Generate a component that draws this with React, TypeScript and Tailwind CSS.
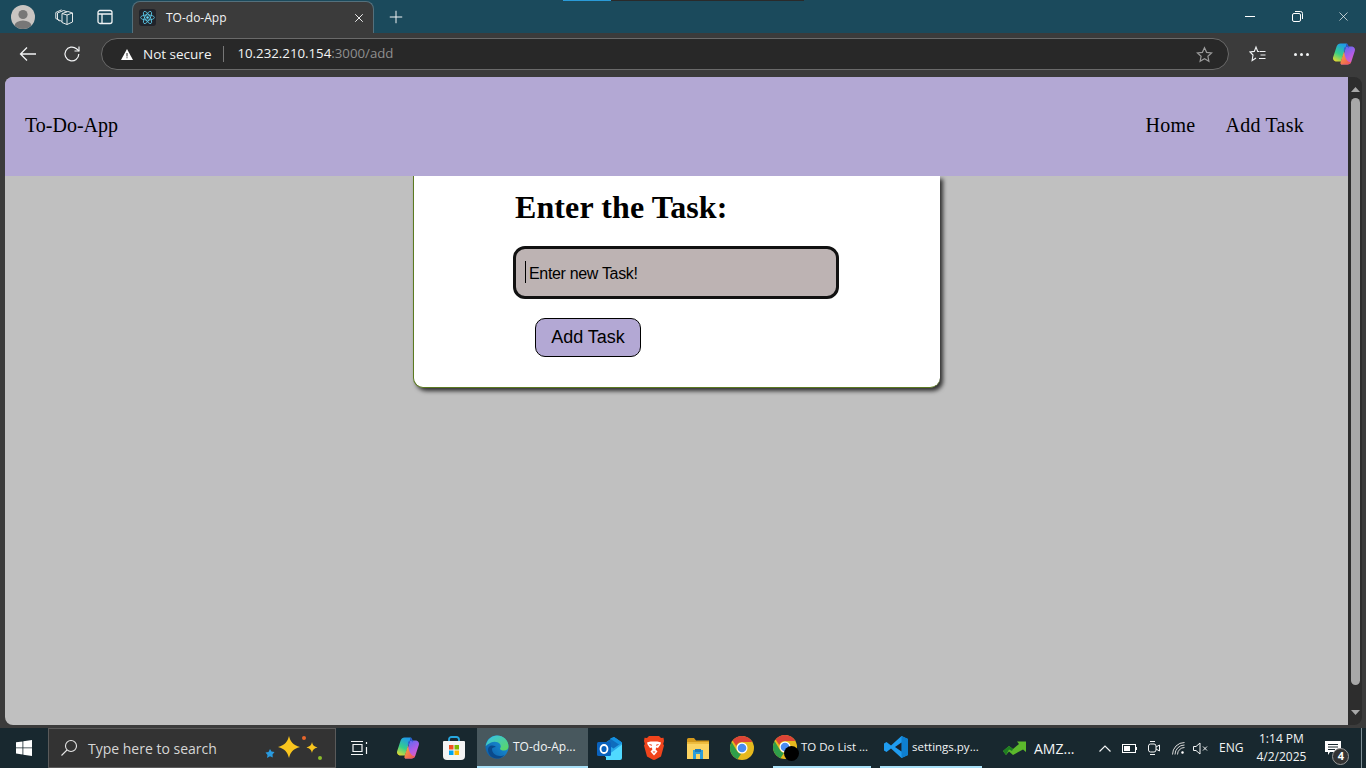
import { Plus, X } from 'lucide-react';

const sans = 'font-["Segoe_UI","Open_Sans","Noto_Sans",sans-serif]';

function Avatar() {
  return (
    <svg width="24" height="24" viewBox="0 0 24 24">
      <defs>
        <clipPath id="av"><circle cx="12" cy="12" r="12" /></clipPath>
      </defs>
      <g clipPath="url(#av)">
        <rect width="24" height="24" fill="#c9c5c2" />
        <circle cx="12" cy="9.5" r="4.6" fill="#777" />
        <ellipse cx="12" cy="21" rx="8.5" ry="5.6" fill="#777" />
      </g>
    </svg>
  );
}

function Workspaces() {
  return (
    <svg width="18" height="16" viewBox="0 0 18 16" fill="none" stroke="#e6e9ea" strokeWidth="1">
      <path d="M7 4.500 13 2.500l4.500 1.500v9L12 15.500l-5-2Z" />
      <path d="M12 15.500V6L7 4.500M12 6l5.500-2" />
      <path d="M4.500 12 2.500 10.500V4L8.500 1.500 12 2.800" />
      <path d="M7 12.500 .8 9.500V3.500L6.500.8" />
    </svg>
  );
}

function TabActions() {
  return (
    <svg width="16" height="16" viewBox="0 0 16 16" fill="none" stroke="#f2f4f5" strokeWidth="1.300">
      <rect x="1" y="1.500" width="14" height="13" rx="2" />
      <path d="M1 5h14M5 5v9.500" />
    </svg>
  );
}

function ReactIcon() {
  return (
    <div className="flex h-[17px] w-[17px] items-center justify-center rounded-[3px] bg-[#20232a]">
      <svg width="15" height="15" viewBox="-12 -12 24 24" fill="none" stroke="#61dafb" strokeWidth="1.200">
        <circle r="2" fill="#61dafb" stroke="none" />
        <ellipse rx="11" ry="4.200" />
        <ellipse rx="11" ry="4.200" transform="rotate(60)" />
        <ellipse rx="11" ry="4.200" transform="rotate(120)" />
      </svg>
    </div>
  );
}

function CopilotIcon({ id }: { id: string }) {
  return (
    <svg width="24" height="24" viewBox="0 0 24 24">
      <defs>
        <linearGradient id={`${id}a`} x1="0.6" y1="0" x2="0.2" y2="1">
          <stop offset="0" stopColor="#1f9be8" />
          <stop offset="0.55" stopColor="#35cf8a" />
          <stop offset="1" stopColor="#e3d92f" />
        </linearGradient>
        <linearGradient id={`${id}b`} x1="0.3" y1="0" x2="0.8" y2="1">
          <stop offset="0" stopColor="#5b6cf0" />
          <stop offset="0.55" stopColor="#b45be6" />
          <stop offset="1" stopColor="#f062a8" />
        </linearGradient>
        <linearGradient id={`${id}c`} x1="0" y1="0" x2="1" y2="1">
          <stop offset="0" stopColor="#f9b13a" />
          <stop offset="1" stopColor="#ec4a5c" />
        </linearGradient>
      </defs>
      <path d="M8.500 1.500H15L9 19.500H4.500C2 19.500.4 17.300 1.200 15L4.700 4.300C5.300 2.600 6.700 1.500 8.500 1.500Z" fill={`url(#${id}a)`} />
      <path d="M14 4.500H19.500C22 4.500 23.600 6.700 22.800 9L19.300 19.700C18.700 21.400 17.300 22.500 15.500 22.500H9Z" fill={`url(#${id}b)`} />
      <path d="M12 9.500 8.500 20.500C8 22 9 22.500 10 22.500H15.500C17 22.500 18.400 21.700 19 20.300 15 20 13 16 12 9.500Z" fill={`url(#${id}c)`} />
      <path d="M15 1.500 12 9.500C11.500 7.500 12.500 4.500 14 4.500 15.500 4.500 16.500 5.500 17 6.500 16.700 4 16 2.500 15 1.500Z" fill="#2f58d8" />
    </svg>
  );
}

function EdgeIcon() {
  return (
    <svg width="24" height="24" viewBox="0 0 24 24">
      <defs>
        <linearGradient id="edA" x1="0" y1="1" x2="1" y2="0">
          <stop offset="0" stopColor="#0c59a4" />
          <stop offset="1" stopColor="#1b9de2" />
        </linearGradient>
        <linearGradient id="edB" x1="0" y1="0" x2="1" y2="1">
          <stop offset="0" stopColor="#35c1f1" />
          <stop offset="1" stopColor="#5dd85a" />
        </linearGradient>
      </defs>
      <circle cx="12" cy="12" r="11.500" fill="url(#edA)" />
      <path d="M.7 11C2 4 7 .5 12 .5c6 0 11.500 4.500 11.500 11 0 2.500-2 4-4.500 4-2 0-4-.6-4-2 1-1 1-3 0-4.500C13 6.500 9 6 6 7.500 3.500 8.800 2 10 .7 11Z" fill="url(#edB)" />
      <path d="M7 14c0 4 3.500 7 8 7 2 0 3.500-.5 4.500-1.300-2 3-5 3.800-7.500 3.800-5 0-9-4-9-9 0-2 1.500-4 4-4 2.200 0 3.500 1 3.800 1.500C8.500 12 7 13 7 14Z" fill="#0a4a8c" />
    </svg>
  );
}

function OutlookIcon() {
  return (
    <svg width="26" height="24" viewBox="0 0 26 24">
      <path d="M8 7 17 1l8 5.500V19a2 2 0 0 1-2 2H8Z" fill="#28a8ea" />
      <path d="M8 7 17 1l8 5.500-8.500 6Z" fill="#0f6cbd" />
      <path d="M17 1l8 5.500-3 2-9-6Z" fill="#1490df" />
      <path d="M9 24h14a2 2 0 0 0 2-2V8.500l-12 9H9Z" fill="#50d9ff" />
      <rect x="0" y="6" width="14" height="14" rx="1.500" fill="#0a62bd" />
      <ellipse cx="7" cy="13" rx="3.500" ry="4" fill="none" stroke="#fff" strokeWidth="1.800" />
    </svg>
  );
}

function BraveIcon() {
  return (
    <svg width="20" height="24" viewBox="0 0 20 24">
      <path d="M5 0h10l2 2 2.500-.3L20 5l-.8 3 .8 1.500-3 11-5.500 3L10 24l-1.500-.5-5.500-3L0 9.500.8 8 0 5 .5 1.700 3 2Z" fill="#f0441c" />
      <path d="M6.500 5.500h7l3.500 1-.6 2-2.400 3.500-1.800-.6-.6 2 1.900 2.100L10 19.500 6.500 15.500l1.900-2.100-.6-2-1.800.6L3.600 8.500 3 6.500Z" fill="#fff" />
      <path d="M8.500 15.500h3L10 17Z" fill="#f0441c" />
      <path d="M5.500 8.500 8 9.300M14.500 8.500 12 9.300" stroke="#f0441c" strokeWidth="1" />
    </svg>
  );
}

function ExplorerIcon() {
  return (
    <svg width="22" height="21" viewBox="0 0 22 21">
      <path d="M0 1.500A1.500 1.500 0 0 1 1.500 0H7l2 2.500h13V6H0Z" fill="#d4991c" />
      <rect y="4.500" width="22" height="16.500" fill="#fcd462" />
      <rect y="4.500" width="22" height="1.500" fill="#f0bd3e" />
      <path d="M6 12h10v9h-3v-5H9v5H6Z" fill="#2e9ed8" />
      <rect x="8" y="11" width="6" height="3" fill="#1c78b8" />
    </svg>
  );
}

function ChromeIcon() {
  return (
    <svg width="24" height="24" viewBox="0 0 24 24">
      <circle cx="12" cy="12" r="12" fill="#e6b91e" />
      <path d="M12 0a12 12 0 0 1 10.400 6H12a6 6 0 0 0-5.700 4L2.600 4.400A12 12 0 0 1 12 0Z" fill="#dc4437" />
      <path d="M1.600 6 7 15a6 6 0 0 0 4 2.900L7.500 23.200A12 12 0 0 1 1.600 6Z" fill="#2f9e4a" />
      <circle cx="12" cy="12" r="5.500" fill="#fff" />
      <circle cx="12" cy="12" r="4.300" fill="#4a8cf0" />
    </svg>
  );
}

function VscodeIcon() {
  return (
    <svg width="24" height="24" viewBox="0 0 24 24">
      <path d="M17.500 1 24 4v16l-6.500 3L7 13.500l-4.500 3.500L0 15.500v-7L2.500 7 7 10.500Z" fill="#1f9cf0" />
      <path d="M17.500 1 24 4v16l-6.500 3Z" fill="#0e7fd0" />
      <path d="M17.500 7.500 11 12l6.500 4.500Z" fill="#17202a" />
    </svg>
  );
}

function StoreIcon() {
  return (
    <svg width="24" height="24" viewBox="0 0 24 24">
      <path d="M7 6V3.500A2.500 2.500 0 0 1 9.500 1h5A2.500 2.500 0 0 1 17 3.500V6" fill="none" stroke="#27a8e0" strokeWidth="1.800" />
      <path d="M1 6a1 1 0 0 1 1-1h20a1 1 0 0 1 1 1v14a4 4 0 0 1-4 4H5a4 4 0 0 1-4-4Z" fill="#f4f4f4" />
      <rect x="7" y="9" width="4.500" height="4.500" fill="#f25022" />
      <rect x="12.500" y="9" width="4.500" height="4.500" fill="#7fba00" />
      <rect x="7" y="14.500" width="4.500" height="4.500" fill="#00a4ef" />
      <rect x="12.500" y="14.500" width="4.500" height="4.500" fill="#ffb900" />
    </svg>
  );
}

function Sparkles() {
  return (
    <svg width="62" height="28" viewBox="0 0 62 28">
      <path d="M24 2c1.500 6 4 9 11 11-7 2-9.500 5-11 11-1.500-6-4-9-11-11 7-2 9.500-5 11-11Z" fill="#f9c51e" />
      <path d="M47 8c.6 3 1.800 4.400 5.500 5.500-3.700 1-4.900 2.500-5.500 5.500-.6-3-1.800-4.500-5.500-5.500C45.200 12.400 46.400 11 47 8Z" fill="#f9c51e" />
      <path d="M5 15l1.500 2.500 3 .5-2 2.500.3 3-2.800-1.200L2 24l.5-3L.5 18.500l3-.5Z" fill="#2a9be0" />
      <circle cx="39" cy="4" r="2" fill="#e8662c" />
      <circle cx="55" cy="24" r="2" fill="#8cbc2c" />
    </svg>
  );
}

function IconSlot({ children, width }: { children: React.ReactNode; width: string }) {
  return <div className={`flex h-full shrink-0 items-center justify-center ${width}`}>{children}</div>;
}

export default function App() {
  return (
    <div className={`flex h-[768px] w-[1366px] flex-col overflow-hidden bg-[#3b3b3b] ${sans}`}>
      {/* title bar */}
      <div className="relative flex h-[33px] shrink-0 items-end bg-[#1b4a5c]">
        <div className="absolute left-[563px] top-0 h-px w-[48px] bg-[#2a9bd8]" />
        <div className="absolute left-[611px] top-0 h-px w-[193px] bg-[#2a2a2a]" />
        <div className="flex h-full w-[132px] items-center">
          <div className="ml-[11px]"><Avatar /></div>
          <div className="ml-[20px]"><Workspaces /></div>
          <div className="ml-[24px]"><TabActions /></div>
        </div>
        <div className="flex h-[32px] w-[242px] items-center rounded-t-[8px] border border-b-0 border-[#54707c] bg-[#3b3b3b] pl-[6px] pr-[7px]">
          <ReactIcon />
          <span className="ml-[10px] flex-1 text-[12px] text-[#f2f4f5]">TO-do-App</span>
          <X size={14} color="#eee" strokeWidth={1.700} />
        </div>
        <div className="flex h-full items-center pl-[12px]">
          <Plus size={20} color="#f2f4f5" strokeWidth={1.200} />
        </div>
        <div className="ml-auto flex h-full items-center">
          <div className="flex w-[46px] justify-center pr-[3px]"><div className="h-px w-[10px] bg-white" /></div>
          <div className="flex w-[46px] justify-center">
            <svg width="11" height="11" viewBox="0 0 11 11" fill="none" stroke="#fff" strokeWidth="1">
              <rect x=".5" y="2.500" width="8" height="8" rx="1.500" />
              <path d="M3 .5h5.500a2 2 0 0 1 2 2V8" />
            </svg>
          </div>
          <div className="flex w-[46px] justify-center"><X size={15} color="#fff" strokeWidth={1.100} /></div>
        </div>
      </div>

      {/* toolbar */}
      <div className="flex h-[44px] shrink-0 items-center bg-[#3b3b3b] pb-[2px]">
        <div className="flex w-[101px] shrink-0 items-center pl-[19px]">
          <svg width="18" height="16" viewBox="0 0 18 16" fill="none" stroke="#f2f4f5" strokeWidth="1.300">
            <path d="M17 8H1.500M8 1.500 1.500 8 8 14.500" />
          </svg>
          <svg className="ml-[26px]" width="18" height="18" viewBox="0 0 18 18" fill="none" stroke="#f2f4f5" strokeWidth="1.200">
            <path d="M15.800 9A6.900 6.900 0 1 1 13.500 3.800L16 6" />
            <path d="M16 1.500V6h-4.500" />
          </svg>
        </div>
        <div className="flex h-[32px] w-[1128px] shrink-0 items-center rounded-full border border-[#6a6a6a] bg-[#282828] pl-[19px] pr-[15px]">
          <svg width="12" height="11" viewBox="0 0 12 11"><path d="M6 0 12 11H0Z" fill="#fff" /><path d="M5.500 4h1v3.500h-1ZM5.500 8.300h1v1h-1Z" fill="#282828" /></svg>
          <span className="ml-[10px] text-[13.500px] text-[#f2f4f5]">Not secure</span>
          <div className="ml-[12px] h-[16px] w-px bg-[#777]" />
          <span className="ml-[13px] text-[13.250px] text-[#f2f4f5]">10.232.210.154<span className="text-[#8f8f8f]">:3000/add</span></span>
          <svg className="ml-auto" width="17" height="17" viewBox="0 0 24 24" fill="none" stroke="#9a9a9a" strokeWidth="1.700">
            <path d="M12 2.500 15 9l7 .8-5.200 4.700 1.400 7L12 18l-6.200 3.500 1.400-7L2 9.800 9 9Z" />
          </svg>
        </div>
        <div className="flex flex-1 items-center pl-[20px]">
          <svg width="18" height="18" viewBox="0 0 18 18" fill="none" stroke="#f2f4f5" strokeWidth="1.100">
            <path d="M10 6.500 8.700 6.400 7 2 5.300 6.400 1 6.900l3 3.100-.9 5.500L7 13" />
            <path d="M10.500 6.500h6M11.500 10h5M10 13.500h6.500" />
          </svg>
          <div className="ml-[27px] flex gap-[3px]">
            <div className="h-[3px] w-[3px] rounded-full bg-[#f2f4f5]" />
            <div className="h-[3px] w-[3px] rounded-full bg-[#f2f4f5]" />
            <div className="h-[3px] w-[3px] rounded-full bg-[#f2f4f5]" />
          </div>
          <div className="ml-[23px]"><CopilotIcon id="cpTop" /></div>
        </div>
      </div>

      {/* page */}
      <div className="flex min-h-0 flex-1 pl-[5px] pr-[4px]">
        <div className="flex min-w-0 flex-1 flex-col overflow-hidden rounded-tl-[8px] rounded-bl-[8px] bg-[#c0c0c0] font-['Liberation_Serif',serif]">
          <nav className="relative z-10 flex h-[99px] shrink-0 items-center justify-between bg-[#b3a8d4] pb-[3px] pl-[20px] pr-[44px] text-[20px] text-black">
            <span>To-Do-App</span>
            <div className="flex gap-[30px] tracking-[0.25px]">
              <span>Home</span>
              <span>Add Task</span>
            </div>
          </nav>
          <div className="ml-[408px] h-[212px] w-[527px] rounded-b-[10px] border-b border-l border-[#5c7a20] bg-white pl-[101px] shadow-[3px_3px_4px_rgba(0,0,0,0.75)]">
            <h1 className="mt-[13px] text-[32px] leading-[37px] font-bold tracking-[0.1px] text-black">Enter the Task:</h1>
            <div className="relative mt-[20px] -ml-[2px] w-[326px]">
              <input
                readOnly
                placeholder="Enter new Task!"
                className="h-[53px] w-full rounded-[12px] border-[3px] border-[#111] bg-[#bdb3b3] pt-[2px] pl-[13px] font-['Liberation_Sans',sans-serif] text-[16px] tracking-[-0.33px] outline-none placeholder:text-black"
              />
              <div className="absolute top-[15px] left-[12px] h-[22px] w-px bg-black" />
            </div>
            <button className="mt-[19px] ml-[20px] flex h-[39px] w-[106px] items-center justify-center rounded-[10px] border border-black bg-[#b3a8d4] pb-[1px] font-['Liberation_Sans',sans-serif] text-[18px] text-black">
              Add Task
            </button>
          </div>
        </div>
        {/* scrollbar */}
        <div className="flex w-[14px] shrink-0 flex-col items-center rounded-r-[8px] bg-[#2d2d2d] pt-[10px] pb-[10px]">
          <svg width="9" height="5" viewBox="0 0 9 5"><path d="M4.500 0 9 5H0Z" fill="#a8a8a8" /></svg>
          <div className="mt-[6px] h-[587px] w-[9px] rounded-full bg-[#a8a8a8]" />
          <svg className="mt-auto" width="9" height="5" viewBox="0 0 9 5"><path d="M4.500 5 9 0H0Z" fill="#a8a8a8" /></svg>
        </div>
      </div>
      <div className="h-[3px] shrink-0 bg-[#3b3b3b]" />

      {/* taskbar */}
      <div className="flex h-[40px] shrink-0 items-center bg-[#18282f] text-[#f2f4f5]">
        <IconSlot width="w-[48px]">
          <svg width="16" height="16" viewBox="0 0 16 16" fill="#fff">
            <path d="M0 2.300 6.500 1.400V7.500H0ZM7.300 1.300 16 0V7.500H7.300ZM0 8.300H6.500V14.500L0 13.600ZM7.300 8.300H16V16L7.300 14.700Z" />
          </svg>
        </IconSlot>
        <div className="flex h-[40px] w-[288px] shrink-0 items-center border border-[#5a5a5a] bg-[#333333] pl-[11px] pr-[8px]">
          <svg width="18" height="18" viewBox="0 0 18 18" fill="none" stroke="#e6e6e6" strokeWidth="1.100">
            <circle cx="11" cy="7" r="5.500" />
            <path d="M7 11 1.500 16.500" />
          </svg>
          <span className="ml-[10px] text-[14px] text-[#d6d6d6]">Type here to search</span>
          <div className="ml-auto"><Sparkles /></div>
        </div>
        <IconSlot width="w-[48px]">
          <svg width="18" height="16" viewBox="0 0 18 16" fill="none" stroke="#f2f4f5" strokeWidth="1.200">
            <path d="M0 1.500h12M0 14.500h12M2 4.500h9v7H2ZM15.500 2v2M15.500 7v7" />
          </svg>
        </IconSlot>
        <IconSlot width="w-[48px]"><CopilotIcon id="cpBar" /></IconSlot>
        <div className="flex h-full w-[45px] shrink-0 items-center pl-[10px]"><StoreIcon /></div>
        <div className="flex h-full w-[111px] shrink-0 items-center border-b-2 border-[#a8e0f7] bg-[#48585e] pl-[8px] text-[12px]">
          <EdgeIcon />
          <span className="ml-[4px] whitespace-nowrap">TO-do-Ap...</span>
        </div>
        <IconSlot width="w-[44px]"><OutlookIcon /></IconSlot>
        <IconSlot width="w-[44px]"><BraveIcon /></IconSlot>
        <IconSlot width="w-[44px]"><ExplorerIcon /></IconSlot>
        <IconSlot width="w-[44px]"><ChromeIcon /></IconSlot>
        <div className="ml-[9px] flex h-full w-[98px] shrink-0 items-center border-b-2 border-[#a8e0f7] text-[11.500px]">
          <div className="relative h-[24px] w-[24px]">
            <ChromeIcon />
            <div className="absolute -right-[2px] -bottom-[2px] h-[15px] w-[15px] rounded-full bg-black" />
          </div>
          <span className="ml-[4px] whitespace-nowrap">TO Do List ...</span>
        </div>
        <div className="ml-[9px] flex h-full w-[102px] shrink-0 items-center border-b-2 border-[#a8e0f7] pl-[4px] text-[11.500px]">
          <VscodeIcon />
          <span className="ml-[4px] whitespace-nowrap">settings.py...</span>
        </div>
        <div className="ml-[21px] flex h-full w-[90px] shrink-0 items-center text-[14px]">
          <svg width="23" height="14" viewBox="0 0 23 14">
            <path d="M0 10 6 5l4 3 6-5-2-2.500h9V11l-3-2.500L10 14 6 10.500 3 14Z" fill="#5cb82c" />
            <path d="M0 10 6 5l4 3-1 2-3-1.500L3 14Z" fill="#1e7d22" />
          </svg>
          <span className="ml-[8px]">AMZ...</span>
        </div>
        <div className="flex h-full items-center">
          <svg className="ml-[6px]" width="12" height="7" viewBox="0 0 12 7" fill="none" stroke="#f2f4f5" strokeWidth="1.200"><path d="M.5 6.500 6 1l5.500 5.500" /></svg>
          <svg className="ml-[11px]" width="15" height="9" viewBox="0 0 15 9" fill="none" stroke="#fff" strokeWidth="1"><rect x=".5" y=".5" width="13" height="8" /><rect x="2" y="2" width="6" height="5" fill="#fff" stroke="none" /><path d="M14.500 3v3" /></svg>
          <svg className="ml-[11px]" width="12" height="16" viewBox="0 0 12 16" fill="none" stroke="#f2f4f5" strokeWidth="1"><rect x=".5" y="4" width="7.500" height="8" rx="2" /><path d="M8 7l3.500-2v6L8 9M2 1.500h5M2 14.500h5" /></svg>
          <svg className="ml-[12px]" width="13" height="13" viewBox="0 0 13 13" fill="none" stroke="#d8d8d8" strokeWidth="1"><path d="M.5 12.500a12 12 0 0 1 12-12M3 12.500a9.500 9.500 0 0 1 9.500-9.500M5.500 12.500a7 7 0 0 1 7-7" /><circle cx="10.500" cy="10.500" r="1" fill="#fff" /></svg>
          <svg className="ml-[8px]" width="16" height="13" viewBox="0 0 16 13" fill="none" stroke="#f2f4f5" strokeWidth="1"><path d="M.5 4.500h2.500L7 1v11L3 8.500H.5ZM10 4.500l4 4M14 4.500l-4 4" /></svg>
          <span className="ml-[10px] text-[12px]">ENG</span>
          <div className="ml-[9px] flex w-[58px] flex-col items-center text-[12px] leading-[18px]">
            <span>1:14 PM</span>
            <span>4/2/2025</span>
          </div>
          <div className="relative ml-[15px]">
            <svg className="block" width="16" height="14" viewBox="0 0 16 14"><path d="M0 0h16v11H5l-2 3v-3H0Z" fill="#fff" /><path d="M3 3.500h10M3 6h10M3 8.500h7" stroke="#18282f" strokeWidth="1" /></svg>
            <div className="absolute -right-[8px] -bottom-[10px] flex h-[17px] w-[17px] items-center justify-center rounded-full border border-[#999] bg-[#333] text-[11px] font-bold text-white">4</div>
          </div>
        </div>
        <div className="ml-auto mr-[4px] h-full w-px bg-[#7f8f96]" />
      </div>
    </div>
  );
}
